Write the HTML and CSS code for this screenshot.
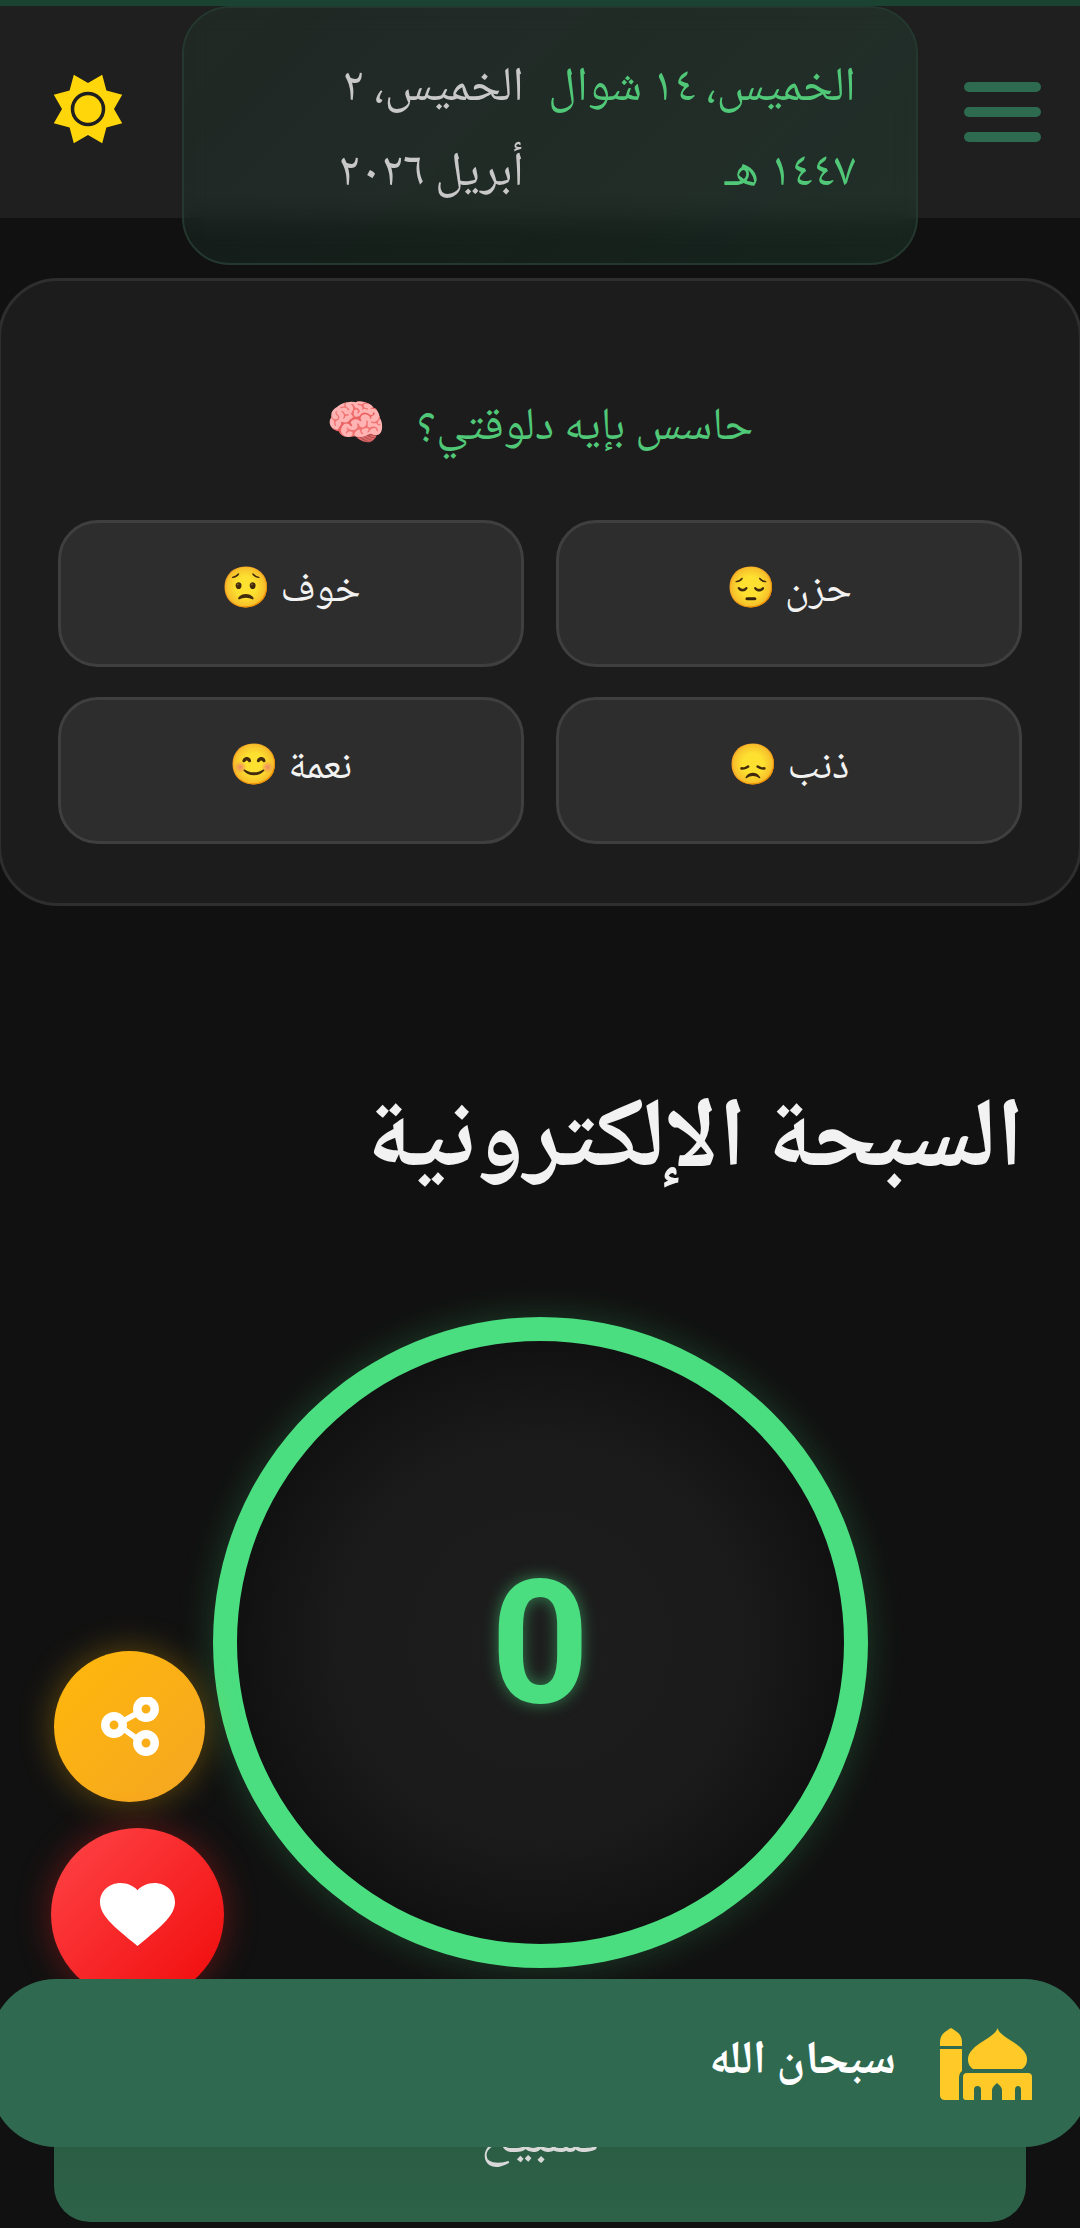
FILE: index.html
```html
<!DOCTYPE html>
<html lang="ar" dir="rtl">
<head>
<meta charset="utf-8">
<title>السبحة الإلكترونية</title>
<link rel="stylesheet" href="styles.css">
</head>
<body>
<div class="top-strip"></div>

<header class="top-bar">
  <div class="menu-btn"><span></span><span></span><span></span></div>
  <div class="date-card">
    <div class="date-col date-hijri">
      <div>الخميس، ١٤ شوال</div>
      <div>١٤٤٧ هـ</div>
    </div>
    <div class="date-col date-greg">
      <div>الخميس، ٢</div>
      <div>أبريل ٢٠٢٦</div>
    </div>
  </div>
  <svg class="sun" viewBox="0 0 76 76" width="76" height="76">
    <polygon fill="#ffd60a" points="38,12 52.2,3.8 56.4,19.6 72.2,23.8 64,38 72.2,52.2 56.4,56.4 52.2,72.2 38,64 23.8,72.2 19.6,56.4 3.8,52.2 12,38 3.8,23.8 19.6,19.6 23.8,3.8"/>
    <circle cx="38" cy="38" r="15.5" fill="#ffd60a" stroke="#1f1f1f" stroke-width="3.5"/>
  </svg>
</header>

<section class="mood-panel">
  <h2 class="mood-title">حاسس بإيه دلوقتي؟ <span class="emoji-big">🧠</span></h2>
  <div class="mood-grid">
    <button class="mood-btn">حزن <span class="emoji">😔</span></button>
    <button class="mood-btn">خوف <span class="emoji">😟</span></button>
    <button class="mood-btn">ذنب <span class="emoji">😞</span></button>
    <button class="mood-btn">نعمة <span class="emoji">😊</span></button>
  </div>
</section>

<main class="tasbih">
  <h1 class="tasbih-title">السبحة الإلكترونية</h1>
  <div class="counter"><span>0</span></div>
  <div class="tasbih-btn">تسبيح</div>
</main>

<div class="fab fab-share">
  <svg viewBox="0 0 60 60" width="60" height="60" fill="none" stroke="#fff">
    <path d="M25 23 36 17M25 33 36 41" stroke-width="5.5"/>
    <circle cx="14" cy="28" r="8.7" stroke-width="8.5"/>
    <circle cx="46" cy="12" r="8.7" stroke-width="8.5"/>
    <circle cx="46" cy="46" r="8.7" stroke-width="8.5"/>
  </svg>
</div>
<div class="fab fab-heart">
  <svg viewBox="2 3 20 18.35" width="75" height="63" preserveAspectRatio="none">
    <path fill="#fff" d="M12 21.35l-1.45-1.32C5.4 15.36 2 12.28 2 8.5 2 5.42 4.42 3 7.5 3c1.74 0 3.41.81 4.5 2.09C13.09 3.81 14.76 3 16.5 3 19.58 3 22 5.42 22 8.5c0 3.78-3.4 6.86-8.55 11.54L12 21.35z"/>
  </svg>
</div>

<div class="zikr-bar">
  <svg class="mosque" viewBox="0 0 92 72" width="92" height="72" fill="#ffca28">
    <path d="M11 0C16 3 22 6 22 14V18H0V14C0 6 6 3 11 0Z"/>
    <path d="M0 21H22V43Q19 45 19 50V72H5Q0 72 0 67Z"/>
    <path d="M57.5 0C59 5 64 8 70 12 80 18 87 24 87 31 87 36 85 39 82 41H33C30 39 28 36 28 31 28 24 35 18 45 12 51 8 56 5 57.5 0Z"/>
    <path d="M27 45H88Q92 45 92 49V72H81V62Q81 58 78 58 75 58 75 62V72H62V62Q62 59 57 55 52 59 52 62V72H41V62Q41 58 37.5 58 34 58 34 62V72H26Q23 72 23 69V49Q23 45 27 45Z"/>
  </svg>
  <span class="zikr-text">سبحان الله</span>
</div>
</body>
</html>
```

FILE: styles.css
```css
html, body {
  margin: 0;
  padding: 0;
}

body {
  position: relative;
  width: 1080px;
  height: 2228px;
  overflow: hidden;
  background: #111111;
  font-family: "Noto Naskh Arabic", "Noto Sans Arabic", "Noto Sans", "DejaVu Sans", sans-serif;
  color: #ffffff;
}

.emoji,
.emoji-big {
  font-family: "Noto Color Emoji", sans-serif;
  font-size: 40px;
}

.emoji-big {
  font-size: 48px;
  margin-right: 20px;
}

.top-strip {
  height: 6px;
  background: #1b4332;
}

.top-bar {
  height: 212px;
  background: #1f1f1f;
  display: flex;
  align-items: center;
  padding: 0 39px 0 50px;
}

.menu-btn {
  width: 77px;
  display: flex;
  flex-direction: column;
  gap: 15px;
  margin-left: 46px;
}

.menu-btn span {
  height: 10px;
  border-radius: 5px;
  background: #2d6a4f;
}

.date-card {
  align-self: flex-start;
  box-sizing: border-box;
  width: 736px;
  height: 259px;
  border: 2px solid #24382f;
  border-radius: 48px;
  padding: 39px 60px 0 0;
  display: flex;
  gap: 24px;
  background: linear-gradient(135deg, rgba(45, 106, 79, 0.12), rgba(45, 106, 79, 0.22));
  backdrop-filter: blur(12px);
  font-size: 48px;
  line-height: 85px;
  white-space: nowrap;
}

.date-col {
  flex: 0 0 304px;
}

.date-hijri {
  color: #50c878;
}

.date-greg {
  color: #c8c8c8;
}

.sun {
  margin-top: -6px;
  margin-right: auto;
}

.mood-panel {
  box-sizing: border-box;
  width: 1084px;
  height: 628px;
  margin: 60px -2px 0;
  padding: 107px 57px 0;
  background: #1c1c1c;
  border: 3px solid #2e2e2e;
  border-radius: 60px;
}

.mood-title {
  height: 70px;
  margin: 0 0 62px;
  text-align: center;
  font-size: 46px;
  font-weight: normal;
  line-height: 70px;
  color: #50c878;
}

.mood-grid {
  display: grid;
  grid-template-columns: 1fr 1fr;
  gap: 30px 32px;
}

.mood-btn {
  height: 147px;
  padding: 0 0 4px;
  background: #2d2d2d;
  border: 3px solid #3f3f3f;
  border-radius: 40px;
  font-family: inherit;
  font-size: 41px;
  color: #f2f2f2;
}

.tasbih {
  padding: 0 54px;
}

.tasbih-title {
  height: 106px;
  margin: 186px 2px 0 0;
  font-size: 98px;
  font-weight: bold;
  line-height: 106px;
  color: #f2f2f2;
}

.counter {
  box-sizing: border-box;
  width: 655px;
  height: 651px;
  margin: 119px auto 0;
  border: 24px solid #4ade80;
  border-radius: 50%;
  background: radial-gradient(closest-side, #1d1d1d 0%, #1b1b1b 65%, #111111 100%);
  box-shadow: 0 0 36px rgba(74, 222, 128, 0.22);
  display: flex;
  align-items: center;
  justify-content: center;
}

.counter span {
  font-family: Roboto, sans-serif;
  font-size: 172px;
  font-weight: bold;
  line-height: 1;
  color: #4ade80;
  text-shadow: 0 0 16px rgba(74, 222, 128, 0.5);
}

.tasbih-btn {
  height: 162px;
  margin-top: 92px;
  border-radius: 0 0 36px 36px;
  background: linear-gradient(#28573f, #2d6248);
  font-size: 52px;
  line-height: 162px;
  text-align: center;
  color: #d8d8d8;
}

/* floating stuff over the page */
.fab {
  position: absolute;
  border-radius: 50%;
  display: flex;
  align-items: center;
  justify-content: center;
}

.fab-share {
  left: 54px;
  top: 1651px;
  width: 151px;
  height: 151px;
  background: linear-gradient(135deg, #ffb80a, #f5a623);
  box-shadow: 0 0 34px rgba(255, 184, 10, 0.35);
}

.fab-heart {
  left: 51px;
  top: 1828px;
  width: 173px;
  height: 173px;
  background: linear-gradient(135deg, #ff4548, #f00a0a);
  box-shadow: 0 0 34px rgba(255, 30, 30, 0.35);
}

.zikr-bar {
  position: absolute;
  left: -10px;
  top: 1979px;
  box-sizing: border-box;
  width: 1100px;
  height: 168px;
  padding-right: 58px;
  border-radius: 66px;
  background: #2f6a50;
  display: flex;
  align-items: center;
  gap: 44px;
}

.mosque {
  margin-top: 2px;
}

.zikr-text {
  font-size: 47px;
  font-weight: bold;
  color: #ffffff;
}
```
